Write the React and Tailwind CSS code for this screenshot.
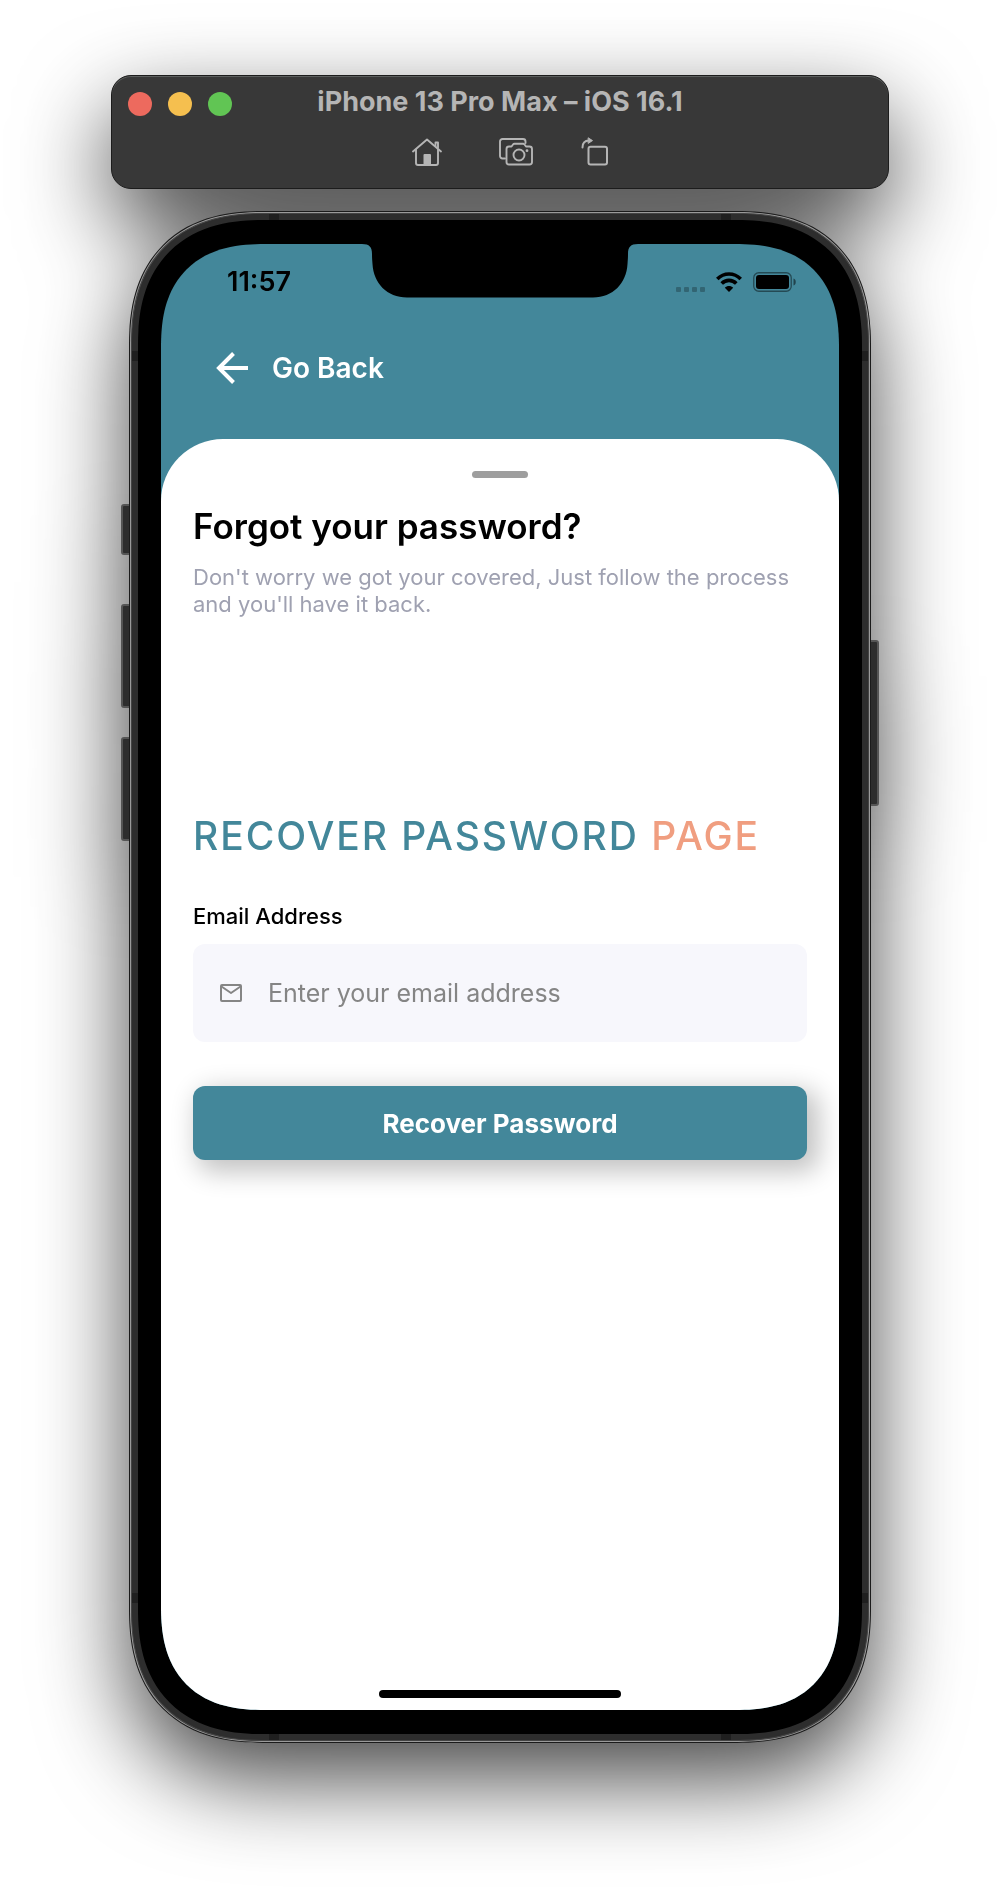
import React from "react";

function HomeIcon() {
  return (
    <svg width="32" height="30" viewBox="0 0 32 30" fill="none" stroke="currentColor" strokeWidth="1.900" strokeLinecap="round" strokeLinejoin="round">
      <path d="M2 14.500 16 2.500 30 14.500" />
      <path d="M5 12.800V26a2 2 0 0 0 2 2h18a2 2 0 0 0 2-2V12.800" />
      <path d="M24.500 9V5.500H27v5" />
      <path d="M12.500 28V18a1 1 0 0 1 1-1h5.500a1 1 0 0 1 1 1V28z" fill="currentColor" stroke="none" />
    </svg>
  );
}

function ScreenshotIcon() {
  return (
    <svg width="34" height="30" viewBox="0 0 34 30" fill="none" stroke="currentColor" strokeWidth="1.900" strokeLinecap="round" strokeLinejoin="round">
      <path d="M6 21.500H3.500A2.500 2.500 0 0 1 1 19V4.500A2.500 2.500 0 0 1 3.500 2H24a2.500 2.500 0 0 1 2.500 2.500V6" />
      <path d="M10 9.500h2.500l1.500-2a2 2 0 0 1 1.500-.800h8.500a2 2 0 0 1 1.500.800l1.500 2h3.500A2.500 2.500 0 0 1 33 12v13a2.500 2.500 0 0 1-2.500 2.500h-20.500A2.500 2.500 0 0 1 7.500 25V12A2.500 2.500 0 0 1 10 9.500z" />
      <circle cx="20" cy="18" r="5.500" />
      <circle cx="28" cy="13.700" r="1.400" fill="currentColor" stroke="none" />
    </svg>
  );
}

function RotateIcon() {
  return (
    <svg width="28" height="30" viewBox="0 0 28 30" fill="none" stroke="currentColor" strokeWidth="2" strokeLinecap="round" strokeLinejoin="round">
      <path d="M1.500 10.500C1.500 6 3.500 3.800 8 3.600" />
      <path d="M7.500 1 11.500 3.600 7.500 6.200z" fill="currentColor" strokeWidth="1" />
      <rect x="7.500" y="9.800" width="18.500" height="17.700" rx="2" />
    </svg>
  );
}

function WifiIcon() {
  return (
    <svg width="26" height="20" viewBox="0 0 26 20" fill="none" stroke="currentColor" strokeWidth="3.600">
      <path d="M1.300 7C7.800.300 18.200.300 24.700 7" />
      <path d="M5.700 11.500C9.800 7.300 16.200 7.300 20.300 11.500" />
      <path d="M8.800 15.700C11 13.400 15 13.400 17.200 15.700L13 20z" fill="currentColor" stroke="none" />
    </svg>
  );
}

function BatteryIcon() {
  return (
    <svg width="43" height="20" viewBox="0 0 43 20" fill="none">
      <rect x="0.750" y="0.750" width="37.500" height="18.500" rx="5" stroke="black" strokeOpacity="0.450" strokeWidth="1.300" />
      <rect x="3" y="3" width="33" height="14" rx="3" fill="black" />
      <path d="M40.500 6.500c3 .8 3 6.200 0 7z" fill="black" fillOpacity="0.500" />
    </svg>
  );
}

function Notch() {
  return (
    <svg className="absolute top-0 left-1/2 -translate-x-1/2" width="276" height="54" viewBox="0 0 276 54" aria-hidden="true">
      <path d="M0 0H276C268.500 0 266 3 266 10C266 14 265.800 16 265.500 20C264.500 39 251 53.500 231 53.500H45C25 53.500 11.500 39 10.500 20C10.200 16 10 14 10 10C10 3 7.500 0 0 0Z" fill="black" />
    </svg>
  );
}

function SimulatorBar() {
  return (
    <header className="grid w-full grid-cols-[1fr_auto_1fr] items-start rounded-[20px] border border-[#1c1c1c] bg-[#383838] px-4 pt-2 pb-[18px] text-[#b5b5b5] shadow-[inset_0_1px_0_#5c5f5e]">
      <div className="flex gap-4 pt-2">
        <button aria-label="Close" className="size-6 rounded-full bg-[#ed6a5e]" />
        <button aria-label="Minimize" className="size-6 rounded-full bg-[#f5bf4f]" />
        <button aria-label="Zoom" className="size-6 rounded-full bg-[#61c554]" />
      </div>
      <div className="flex flex-col items-center">
        <h1 className="text-[27px] leading-9 font-bold whitespace-nowrap">iPhone 13 Pro Max – iOS 16.1</h1>
        <div className="mt-[14px] flex h-9 items-center pl-5">
          <button aria-label="Home"><HomeIcon /></button>
          <button aria-label="Screenshot" className="ml-14"><ScreenshotIcon /></button>
          <button aria-label="Rotate" className="ml-12"><RotateIcon /></button>
        </div>
      </div>
    </header>
  );
}

function StatusBar() {
  return (
    <div className="flex items-center justify-between pt-5 pr-[43px] pl-[66px] text-black">
      <span className="text-[27px] leading-9 font-semibold">11:57</span>
      <div className="flex items-center gap-[11px]">
        <div className="flex gap-[3px] pt-3.5">
          <i className="size-[5px] rounded-[1px] bg-black/25" />
          <i className="size-[5px] rounded-[1px] bg-black/25" />
          <i className="size-[5px] rounded-[1px] bg-black/25" />
          <i className="size-[5px] rounded-[1px] bg-black/25" />
        </div>
        <WifiIcon />
        <BatteryIcon />
      </div>
    </div>
  );
}

function RecoverSheet() {
  return (
    <main className="flex flex-1 flex-col rounded-t-[62px] bg-white px-8 pt-8 pb-3">
      <div className="mx-auto h-[7px] w-14 rounded-full bg-[#9e9e9e]" />
      <h2 className="mt-[26px] text-[35px] leading-11 font-semibold text-black">Forgot your password?</h2>
      <p className="mt-4 text-[22px] leading-[27px] text-[#9fa1b1]">
        Don't worry we got your covered, Just follow the process and you'll have it back.
      </p>
      <p className="mt-[194px] text-[39px] leading-12 font-medium tracking-wider whitespace-nowrap text-[#43879a]">
        RECOVER PASSWORD <span className="text-[#f09e80]">PAGE</span>
      </p>
      <form onSubmit={(e) => e.preventDefault()}>
        <label htmlFor="email" className="mt-[42px] block text-[22px] leading-7 font-medium text-black">Email Address</label>
        <div className="mt-[14px] flex items-center rounded-xl bg-[#f7f7fc] pl-[27px]">
          <svg width="22" height="18" viewBox="0 0 22 18" fill="none" stroke="#858585" strokeWidth="2" strokeLinejoin="round" className="shrink-0" aria-hidden="true">
            <rect x="1" y="1" width="20" height="16" rx="1" />
            <path d="M1.500 2.500 11 9l9.500-6.500" />
          </svg>
          <input
            id="email"
            type="email"
            placeholder="Enter your email address"
            className="ml-[26px] h-[98px] min-w-0 flex-1 bg-transparent text-[25px] text-black outline-none placeholder:text-[#858585]"
          />
        </div>
        <button
          type="submit"
          className="mt-11 h-[74px] w-full rounded-xl bg-[#43879a] text-[26px] font-bold text-white shadow-[8px_8px_26px_4px_rgba(0,0,0,0.24)]"
        >
          Recover Password
        </button>
      </form>
      <div className="mx-auto mt-auto h-2 w-[242px] rounded-full bg-black" />
    </main>
  );
}

function Phone({ children }) {
  return (
    <div className="relative flex w-full flex-1 flex-col">
      <i className="absolute top-[293px] -left-2 h-[51px] w-3 rounded-[3px] border-2 border-[#555] bg-[#2d2d2d]" />
      <i className="absolute top-[393px] -left-2 h-[104px] w-3 rounded-[3px] border-2 border-[#555] bg-[#2d2d2d]" />
      <i className="absolute top-[526px] -left-2 h-[104px] w-3 rounded-[3px] border-2 border-[#555] bg-[#2d2d2d]" />
      <i className="absolute top-[429px] -right-2 h-[166px] w-3 rounded-[3px] border-2 border-[#555] bg-[#2d2d2d]" />
      <div className="relative flex flex-1 flex-col rounded-[134px] border border-[#1b1b1b] bg-[#9a9a9a] p-px [corner-shape:superellipse(1.25)]">
        <div className="relative flex flex-1 flex-col overflow-hidden rounded-[132px] border border-[#444] bg-[#2d2d2d] p-1.5 [corner-shape:superellipse(1.25)]">
          <i className="absolute top-0 left-[137px] h-1.5 w-2.5 bg-[#1f1f1f]" />
          <i className="absolute top-0 right-[137px] h-1.5 w-2.5 bg-[#1f1f1f]" />
          <i className="absolute bottom-0 left-[137px] h-1.5 w-2.5 bg-[#1f1f1f]" />
          <i className="absolute right-[137px] bottom-0 h-1.5 w-2.5 bg-[#1f1f1f]" />
          <i className="absolute top-[137px] left-0 h-2.5 w-1.5 bg-[#1f1f1f]" />
          <i className="absolute top-[137px] right-0 h-2.5 w-1.5 bg-[#1f1f1f]" />
          <i className="absolute bottom-[137px] left-0 h-2.5 w-1.5 bg-[#1f1f1f]" />
          <i className="absolute right-0 bottom-[137px] h-2.5 w-1.5 bg-[#1f1f1f]" />
          <div className="relative flex flex-1 flex-col rounded-[125px] bg-black px-[23px] py-6 [corner-shape:superellipse(1.25)]">
            <div className="relative flex flex-1 flex-col overflow-hidden rounded-[104px] bg-[#43879a] [corner-shape:superellipse(1.3)]">
              {children}
            </div>
          </div>
        </div>
      </div>
    </div>
  );
}

export default function App() {
  return (
    <div className="flex min-h-screen justify-center overflow-hidden bg-white px-6 pt-[75px] pb-[151px] font-['Inter',sans-serif]">
      <div className="flex w-full max-w-[778px] flex-col drop-shadow-[0_36px_45px_rgba(0,0,0,0.72)]">
        <SimulatorBar />
        <div className="mt-[22px] flex flex-1 flex-col px-[18px]">
          <Phone>
            <Notch />
            <StatusBar />
            <a href="#back" className="mt-12 mb-[51px] flex items-center gap-6 self-start pl-[55px] text-white">
              <svg width="32" height="32" viewBox="0 0 32 32" fill="none" stroke="currentColor" strokeWidth="4" aria-hidden="true">
                <path d="M17.500 1.500 3 16l14.500 14.500M3 16h29" />
              </svg>
              <span className="text-[28px] leading-10 font-semibold">Go Back</span>
            </a>
            <RecoverSheet />
          </Phone>
        </div>
      </div>
    </div>
  );
}
